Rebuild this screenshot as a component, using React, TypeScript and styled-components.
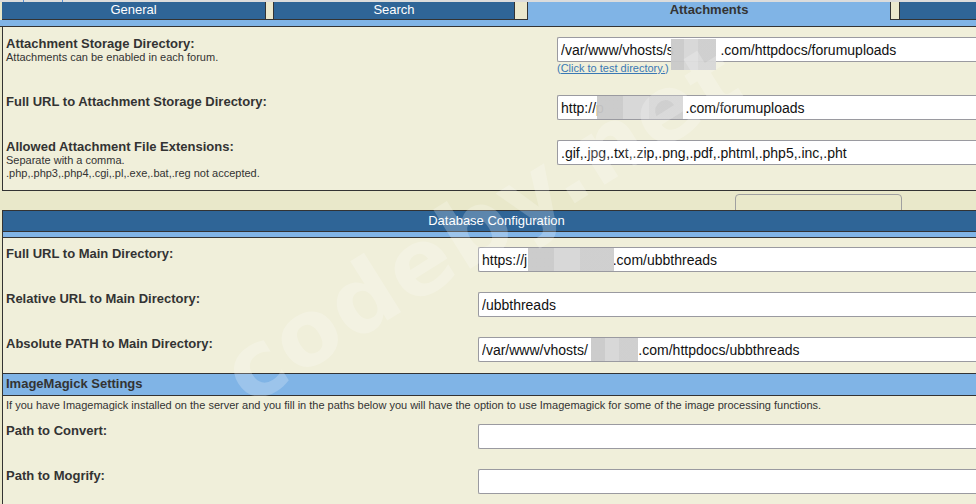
import React from "react";
import styled, { createGlobalStyle } from "styled-components";

const GlobalStyle = createGlobalStyle`
  html, body {
    margin: 0;
    padding: 0;
    overflow: hidden;
    background: #e9e8ca;
  }
  body {
    font-family: "Liberation Sans", Arial, sans-serif;
    color: #333;
  }
`;

const darkBlue = "#2f6597";
const lightBlue = "#80b4e6";
const cream = "#f0efda";

type Field = {
  label: string;
  hint?: string[];
  value: string;
  redact?: { left: number; width: number; top?: number; height?: number };
  testLink?: boolean;
};

const gap = (n: number) => " ".repeat(n);

const attachmentFields: Field[] = [
  {
    label: "Attachment Storage Directory:",
    hint: ["Attachments can be enabled in each forum."],
    value: `/var/www/vhosts/s${gap(12)}.com/httpdocs/forumuploads`,
    redact: { left: 114, width: 45, top: 2, height: 31 },
    testLink: true,
  },
  {
    label: "Full URL to Attachment Storage Directory:",
    value: `http://p${gap(21)}.com/forumuploads`,
    redact: { left: 40, width: 86 },
  },
  {
    label: "Allowed Attachment File Extensions:",
    hint: ["Separate with a comma.", ".php,.php3,.php4,.cgi,.pl,.exe,.bat,.reg not accepted."],
    value: ".gif,.jpg,.txt,.zip,.png,.pdf,.phtml,.php5,.inc,.pht",
  },
];

const dbFields: Field[] = [
  {
    label: "Full URL to Main Directory:",
    value: `https://j${gap(22)}.com/ubbthreads`,
    redact: { left: 50, width: 86 },
  },
  { label: "Relative URL to Main Directory:", value: "/ubbthreads" },
  {
    label: "Absolute PATH to Main Directory:",
    value: `/var/www/vhosts/${gap(13)}.com/httpdocs/ubbthreads`,
    redact: { left: 113, width: 47 },
  },
];

const magickFields: Field[] = [
  { label: "Path to Convert:", value: "" },
  { label: "Path to Mogrify:", value: "" },
];

const tabs = [
  { name: "General", width: 263, gap: 9 },
  { name: "Search", width: 240, gap: 14 },
  { name: "Attachments", width: 362, gap: 10, active: true },
  { name: "", width: 100, gap: 0 },
];

const App: React.FC = () => {
  const renderRows = (fields: Field[], labelWidth: number, pad: string) =>
    fields.map((f) => (
      <SettingRow key={f.label} $labelWidth={labelWidth} $pad={pad}>
        <LabelCell>
          <Label>{f.label}</Label>
          {f.hint && f.hint.map((h) => <Hint key={h}>{h}</Hint>)}
        </LabelCell>
        <FieldCell>
          <FieldWrap>
            <TextInput readOnly value={f.value} />
            {f.redact && (
              <Redact
                style={{
                  left: f.redact.left,
                  width: f.redact.width,
                  top: f.redact.top ?? 1,
                  height: f.redact.height ?? 23,
                }}
              />
            )}
          </FieldWrap>
          {f.testLink && (
            <TestLink>
              (<u>Click to test directory.</u>)
            </TestLink>
          )}
        </FieldCell>
      </SettingRow>
    ));

  return (
    <>
      <GlobalStyle />
      <Page>
        <TopStrip>
          <StubTab />
        </TopStrip>
        <TabBar>
          {tabs.map((t) => (
            <React.Fragment key={t.name || "more"}>
              <Tab $active={!!t.active} $width={t.width}>
                {t.name}
              </Tab>
              {t.gap > 0 && <TabGap $width={t.gap} />}
            </React.Fragment>
          ))}
        </TabBar>
        <SubStrip $height={6} />

        <AttachPanel>
          {renderRows(attachmentFields.slice(0, 1), 551, "10px 3px 11px")}
          {renderRows(attachmentFields.slice(1, 2), 551, "10px 3px 10px")}
          {renderRows(attachmentFields.slice(2), 551, "10px 3px 10px")}
        </AttachPanel>

        <PanelGap>
          <GhostButton />
        </PanelGap>

        <ConfigPanel>
          <PanelHeader>Database Configuration</PanelHeader>
          <SubStrip $height={5} />
          {renderRows(dbFields, 472, "9px 3px 11px")}
          <SubHeader>ImageMagick Settings</SubHeader>
          <Description>
            If you have Imagemagick installed on the server and you fill in the paths below you will
            have the option to use Imagemagick for some of the image processing functions.
          </Description>
          {renderRows(magickFields, 472, "9px 3px 11px")}
        </ConfigPanel>

        <Watermark>codeby.net</Watermark>
      </Page>
    </>
  );
};

const Page = styled.div`
  position: relative;
  width: 990px;
  height: 504px;
  overflow: hidden;
`;

const TopStrip = styled.div`
  height: 2px;
  background: #dcdcdc;
`;

const StubTab = styled.div`
  margin-left: 23px;
  width: 38px;
  height: 2px;
  border-left: 1px solid #5b8fd0;
  border-right: 1px solid #5b8fd0;
`;

const TabBar = styled.div`
  display: flex;
  height: 18px;
  margin-left: 2px;
`;

const Tab = styled.div<{ $active: boolean; $width: number }>`
  flex: none;
  width: ${(p) => p.$width}px;
  box-sizing: border-box;
  background: ${(p) => (p.$active ? lightBlue : darkBlue)};
  color: ${(p) => (p.$active ? "#333" : "#fff")};
  font-weight: ${(p) => (p.$active ? "bold" : "normal")};
  font-size: 13px;
  line-height: 16px;
  text-align: center;
  border-bottom: ${(p) => (p.$active ? "none" : "1px solid #333")};
`;

const TabGap = styled.div<{ $width: number }>`
  flex: none;
  width: ${(p) => p.$width}px;
  box-sizing: border-box;
  background: #ebe8cd;
  border: 1px solid #333;
  border-top: none;
`;

const SubStrip = styled.div<{ $height: number }>`
  height: ${(p) => p.$height}px;
  background: ${lightBlue};
  border-bottom: 1px solid #333;
`;

const AttachPanel = styled.div`
  background: ${cream};
  margin-left: 2px;
  border-left: 1px solid #333;
  border-bottom: 1px solid #333;
`;

const SettingRow = styled.div<{ $labelWidth: number; $pad: string }>`
  display: grid;
  grid-template-columns: ${(p) => p.$labelWidth}px 620px;
  padding: ${(p) => p.$pad};
  align-items: start;
`;

const LabelCell = styled.div`
  display: flex;
  flex-direction: column;
  margin-top: -1px;
`;

const Label = styled.div`
  font-size: 13px;
  font-weight: bold;
  line-height: 15px;
  color: #333;
`;

const Hint = styled.div`
  font-size: 11px;
  line-height: 13px;
  color: #333;
`;

const FieldCell = styled.div`
  display: flex;
  flex-direction: column;
`;

const FieldWrap = styled.div`
  position: relative;
  height: 25px;
`;

const TextInput = styled.input`
  box-sizing: border-box;
  width: 100%;
  height: 25px;
  margin: 0;
  padding: 0 3px;
  border: 1px solid #9a9aa0;
  border-right: none;
  border-radius: 2px 0 0 2px;
  background: #fff;
  font-family: "Liberation Sans", Arial, sans-serif;
  font-size: 14px;
  color: #111;
  outline: none;
  white-space: pre;
`;

const Redact = styled.span`
  position: absolute;
  background:
    linear-gradient(90deg, rgba(190, 190, 190, 0.5) 0 30%, transparent 30% 60%, rgba(200, 200, 200, 0.6) 60%),
    #d6d6d6;
  opacity: 0.95;
`;

const TestLink = styled.span`
  font-size: 11px;
  line-height: 12px;
  color: #3a78b4;
`;

const PanelGap = styled.div`
  height: 19px;
  overflow: hidden;
  background: #e9e8ca;
`;

const GhostButton = styled.div`
  margin: 3px 0 0 735px;
  width: 165px;
  height: 22px;
  border: 1px solid #a0a0a0;
  border-radius: 4px;
`;

const ConfigPanel = styled.div`
  background: ${cream};
  margin-left: 2px;
  border-left: 1px solid #333;
  border-top: 1px solid #333;
`;

const PanelHeader = styled.div`
  height: 20px;
  background: ${darkBlue};
  color: #fff;
  font-size: 13px;
  line-height: 19px;
  text-align: center;
  border-bottom: 1px solid #333;
`;

const SubHeader = styled.div`
  height: 21px;
  background: ${lightBlue};
  border-top: 1px solid #333;
  border-bottom: 1px solid #333;
  padding-left: 3px;
  font-size: 13px;
  font-weight: bold;
  line-height: 20px;
  color: #333;
`;

const Description = styled.div`
  padding: 3px 3px 3px;
  font-size: 11px;
  line-height: 13px;
  color: #333;
`;

const Watermark = styled.div`
  position: absolute;
  left: 232px;
  top: 335px;
  font-family: "DejaVu Sans", sans-serif;
  font-weight: bold;
  font-size: 92px;
  line-height: 92px;
  color: rgba(255, 255, 255, 0.22);
  transform: rotate(-32deg);
  transform-origin: 0 50%;
  white-space: nowrap;
  pointer-events: none;
  letter-spacing: 2px;
`;

export default App;
